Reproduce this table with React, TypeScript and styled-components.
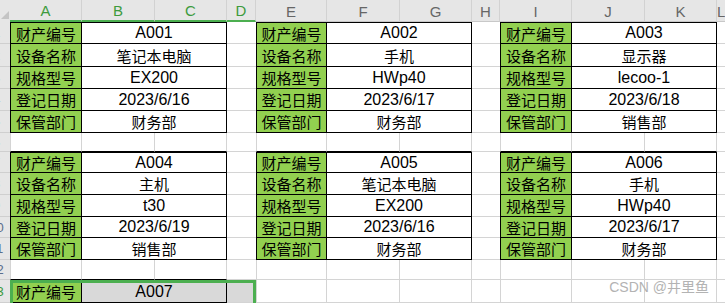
import styled, { createGlobalStyle } from 'styled-components';

const GlobalStyle = createGlobalStyle`
  html, body { margin: 0; padding: 0; background: #fff; }
  body { font-family: "Liberation Sans", "Noto Sans CJK SC", sans-serif; }
`;

// column widths (row header, A..K) and row heights (rows 1..13) read off the sheet
const COLS = [10, 72, 73, 72, 29, 71, 73, 72, 28, 72, 73, 72];
const ROWS = [22, 23, 22, 22, 22, 19, 21, 22, 22, 21, 22, 20, 23];
const LETTERS = ['A', 'B', 'C', 'D', 'E', 'F', 'G', 'H', 'I', 'J', 'K', 'L'];

const GRID = '#d4d4d4';
const INK = '#000';
const LABEL = '#92d050';
const SEL = '#4caf50';
const SEL_FILL = '#d9d9d9';

const isCjk = (s: string) => /[\u4e00-\u9fff]/.test(s);

const Sheet = styled.div`
  position: relative;
  display: grid;
  grid-template-columns: ${COLS.map(c => `${c}px`).join(' ')} 1fr;
  grid-template-rows: 22px ${ROWS.map(r => `${r}px`).join(' ')};
  width: 725px;
  height: 303px;
  overflow: hidden;
`;

const Corner = styled.div`
  position: relative;
  background: #e6e6e6;
  &::after {
    content: '';
    position: absolute;
    right: 1px;
    bottom: 3px;
    border-left: 8px solid transparent;
    border-bottom: 8px solid #c4c4c4;
  }
`;

const ColHead = styled.div<{ $sel?: boolean }>`
  box-sizing: border-box;
  display: flex;
  align-items: center;
  justify-content: center;
  background: #e6e6e6;
  border-right: 1px solid #d2d2d2;
  border-bottom: ${p => (p.$sel ? `2px solid ${SEL}` : '1px solid #c8c8c8')};
  color: ${p => (p.$sel ? '#3d9b3d' : '#666')};
  font-size: 15px;
  padding-top: 1px;
`;

const RowHead = styled.div<{ $sel?: boolean }>`
  box-sizing: border-box;
  background: #e6e6e6;
  border-bottom: 1px solid #cfcfcf;
  overflow: hidden;
  color: ${p => (p.$sel ? '#3d9b3d' : '#5a6e8c')};
  font-size: 13px;
`;

// the header is wider than what the screenshot keeps: only its right edge shows
const RowNum = styled.span`
  display: block;
  width: 27px;
  margin-left: -17px;
  text-align: center;
`;

type Edge = string | undefined;

const Cell = styled.div<{
  $span?: number;
  $t?: Edge;
  $l?: Edge;
  $r?: Edge;
  $b?: Edge;
  $fill?: string;
  $cjk?: boolean;
}>`
  grid-column: span ${p => p.$span ?? 1};
  box-sizing: border-box;
  min-width: 0;
  display: flex;
  align-items: center;
  justify-content: center;
  background: ${p => p.$fill ?? '#fff'};
  border-top: ${p => (p.$t ? `1px solid ${p.$t}` : 'none')};
  border-left: ${p => (p.$l ? `1px solid ${p.$l}` : 'none')};
  border-right: ${p => (p.$r ? `1px solid ${p.$r}` : 'none')};
  border-bottom: ${p => (p.$b ? `1px solid ${p.$b}` : 'none')};
  color: #000;
  font-size: ${p => (p.$cjk ? '15px' : '16px')};
  white-space: nowrap;
  overflow: hidden;
`;

const Selection = styled.div`
  position: absolute;
  grid-column: 2 / 6;
  grid-row: 14 / 15;
  inset: 0 0 -6px 0;
  border: 3px solid ${SEL};
  pointer-events: none;
`;

const Watermark = styled.div`
  position: absolute;
  right: 16px;
  bottom: 8px;
  font-size: 14px;
  line-height: 16px;
  color: #b3b3b3;
`;

type Card = { id: string; name: string; model: string; date: string; dept: string };

const FIELDS = ['财产编号', '设备名称', '规格型号', '登记日期', '保管部门'];

const BLOCKS: Card[][] = [
  [
    { id: 'A001', name: '笔记本电脑', model: 'EX200', date: '2023/6/16', dept: '财务部' },
    { id: 'A002', name: '手机', model: 'HWp40', date: '2023/6/17', dept: '财务部' },
    { id: 'A003', name: '显示器', model: 'lecoo-1', date: '2023/6/18', dept: '销售部' },
  ],
  [
    { id: 'A004', name: '主机', model: 't30', date: '2023/6/19', dept: '销售部' },
    { id: 'A005', name: '笔记本电脑', model: 'EX200', date: '2023/6/16', dept: '财务部' },
    { id: 'A006', name: '手机', model: 'HWp40', date: '2023/6/17', dept: '财务部' },
  ],
];

const valueOf = (c: Card, f: number) => [c.id, c.name, c.model, c.date, c.dept][f];

// what sits in sheet row r (0-based) for card column g, or null when empty
const cellAt = (r: number, g: number): [string, string] | null => {
  if (r >= 0 && r <= 4) return [FIELDS[r], valueOf(BLOCKS[0][g], r)];
  if (r >= 6 && r <= 10) return [FIELDS[r - 6], valueOf(BLOCKS[1][g], r - 6)];
  if (r === 12 && g === 0) return [FIELDS[0], 'A007'];
  return null;
};

const App = () => {
  const cells: JSX.Element[] = [];

  ROWS.forEach((h, r) => {
    cells.push(
      <RowHead key={`rh${r}`} $sel={r === 12}>
        <RowNum style={{ lineHeight: `${h}px` }}>{r + 1}</RowNum>
      </RowHead>
    );
    for (let g = 0; g < 3; g++) {
      const item = cellAt(r, g);
      const next = cellAt(r + 1, g);
      const first = !!item && (r === 0 || r === 6 || r === 12);
      const top = first ? INK : undefined;
      if (item) {
        cells.push(
          <Cell key={`l${r}${g}`} $t={top} $l={INK} $r={INK} $b={INK} $fill={LABEL} $cjk>
            {item[0]}
          </Cell>,
          <Cell
            key={`v${r}${g}`}
            $span={2}
            $t={top}
            $r={INK}
            $b={INK}
            $fill={r === 12 ? SEL_FILL : '#fff'}
            $cjk={isCjk(item[1])}
          >
            {item[1]}
          </Cell>
        );
      } else {
        const bottom = next ? INK : GRID;
        cells.push(
          <Cell key={`a${r}${g}`} $l={GRID} $r={GRID} $b={bottom} />,
          <Cell key={`b${r}${g}`} $r={GRID} $b={bottom} />,
          <Cell key={`c${r}${g}`} $r={GRID} $b={bottom} />
        );
      }
      cells.push(
        <Cell key={`g${r}${g}`} $b={GRID} $fill={r === 12 && g === 0 ? SEL_FILL : '#fff'} />
      );
    }
  });

  return (
    <>
      <GlobalStyle />
      <Sheet>
        <Corner />
        {LETTERS.map((l, i) => (
          <ColHead key={l} $sel={i < 4}>
            {l}
          </ColHead>
        ))}
        {cells}
        <Selection />
        <Watermark>CSDN @井里鱼</Watermark>
      </Sheet>
    </>
  );
};

export default App;
